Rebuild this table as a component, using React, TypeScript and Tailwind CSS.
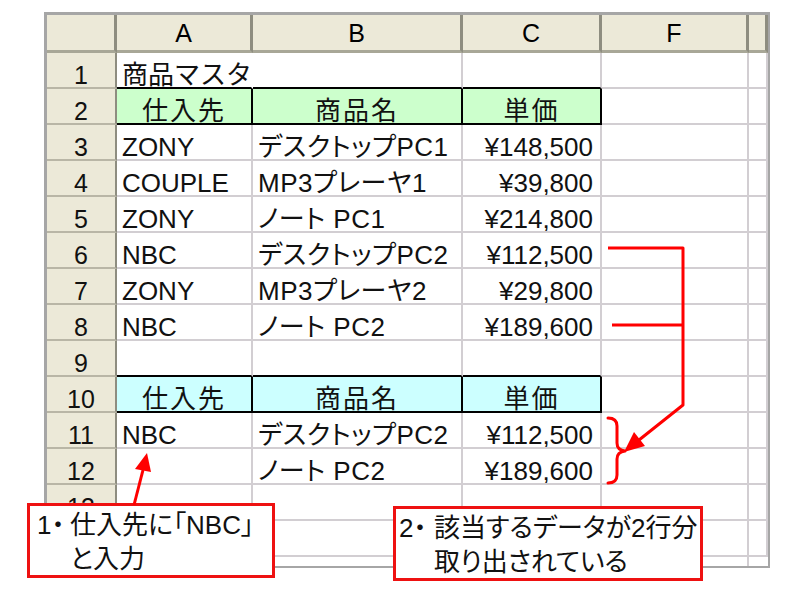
const font = "font-['Liberation_Sans','Noto_Sans_CJK_JP',sans-serif]";

type Row = {
  n: string;
  a?: string;
  b?: string;
  c?: string;
  kind?: "title" | "green" | "cyan" | "above";
};

const rows: Row[] = [
  { n: "1", a: "商品マスタ", kind: "title" },
  { n: "2", a: "仕入先", b: "商品名", c: "単価", kind: "green" },
  { n: "3", a: "ZONY", b: "デスクトップPC1", c: "¥148,500" },
  { n: "4", a: "COUPLE", b: "MP3プレーヤ1", c: "¥39,800" },
  { n: "5", a: "ZONY", b: "ノート PC1", c: "¥214,800" },
  { n: "6", a: "NBC", b: "デスクトップPC2", c: "¥112,500" },
  { n: "7", a: "ZONY", b: "MP3プレーヤ2", c: "¥29,800" },
  { n: "8", a: "NBC", b: "ノート PC2", c: "¥189,600" },
  { n: "9", kind: "above" },
  { n: "10", a: "仕入先", b: "商品名", c: "単価", kind: "cyan" },
  { n: "11", a: "NBC", b: "デスクトップPC2", c: "¥112,500" },
  { n: "12", b: "ノート PC2", c: "¥189,600" },
  { n: "13" },
  { n: "14" },
];

function HeaderRow() {
  const head = "h-full flex items-center justify-center pt-[2px] border-r-[3px] border-b-[3px] border-r-[#8e8d80] border-b-[#a8a797] bg-[#ece9d8] text-[25px]";
  return (
    <div className="flex h-[38px]">
      <div className={`${head} w-[70px] border-r-2`} />
      <div className={`${head} w-[136px]`}>A</div>
      <div className={`${head} w-[210px]`}>B</div>
      <div className={`${head} w-[139px]`}>C</div>
      <div className={`${head} w-[147px]`}>F</div>
      <div className={`${head} w-[19px] border-r-0`} />
    </div>
  );
}

function SheetRow({ row }: { row: Row }) {
  const cell = "h-full flex items-end leading-[24px] border-r-2 border-b-2 whitespace-nowrap";
  const grid = "border-[#d2ced2]";
  let a = grid;
  let b = grid;
  let c = grid;
  let fill = "";
  if (row.kind === "title") {
    a = "border-r-white border-b-black";
    b = "border-r-[#d2ced2] border-b-black";
    c = "border-r-[#d2ced2] border-b-black";
  }
  if (row.kind === "above") {
    a = "border-r-[#d2ced2] border-b-black";
    b = "border-r-[#d2ced2] border-b-black";
    c = "border-r-[#d2ced2] border-b-black";
  }
  if (row.kind === "green") {
    a = b = c = "border-black";
    fill = "bg-[#ccffcc] justify-center tracking-[2px]";
  }
  if (row.kind === "cyan") {
    a = b = c = "border-black";
    fill = "bg-[#ccffff] justify-center tracking-[2px]";
  }
  const head = !!fill;
  return (
    <div className="flex h-[36px] text-[26px] text-[#111]">
      <div className="h-full w-[70px] flex items-end justify-center leading-[24px] bg-[#ece9d8] border-r-2 border-b-2 border-r-[#8e8d80] border-b-[#b9b6a6] text-[25px]">
        {row.n}
      </div>
      <div className={`${cell} ${a} ${fill} w-[136px] ${head ? "" : "pl-[5px]"} ${row.kind === "title" ? "overflow-visible" : "overflow-hidden"}`}>
        {row.a}
      </div>
      <div className={`${cell} ${b} ${fill} w-[210px] ${head ? "" : "pl-[5px] [font-feature-settings:'palt'] tracking-[0.5px]"} overflow-hidden`}>
        {row.b}
      </div>
      <div className={`${cell} ${c} ${fill} w-[139px] ${head ? "" : "justify-end pr-[7px]"} overflow-hidden`}>
        {row.c}
      </div>
      <div className={`${cell} border-[#d2ced2] w-[147px]`} />
      <div className={`${cell} border-[#d2ced2] border-r-0 w-[19px]`} />
    </div>
  );
}

function Arrows() {
  return (
    <svg className="absolute left-0 top-0 pointer-events-none" width="800" height="590" viewBox="0 0 800 590">
      <g stroke="#ff0000" strokeWidth="3" fill="none" strokeLinejoin="round">
        <path d="M608 248 H683 V405 L639 440" />
        <path d="M612 325 H683" />
        <path d="M608 418 Q617 418 617 426 V443 Q617 450 625 451 Q617 452 617 459 V475 Q617 483 608 483" strokeLinecap="round" />
        <path d="M134 505 L143 470" />
      </g>
      <g fill="#ff0000">
        <polygon points="624,452 645,446 634,432" />
        <polygon points="147,453 151,472 135,469" />
      </g>
    </svg>
  );
}

function Callout({
  className,
  num,
  numWidth,
  lines,
}: {
  className: string;
  num: string;
  numWidth: string;
  lines: string[];
}) {
  return (
    <div className={`absolute bg-white border-[3px] border-[#ee1111] flex text-[26px] leading-[34px] text-[#111] [font-feature-settings:'palt'] ${className}`}>
      <span className={`shrink-0 ${numWidth}`}>{num}</span>
      <div className="flex flex-col">
        {lines.map((l) => (
          <span key={l} className="whitespace-nowrap">
            {l}
          </span>
        ))}
      </div>
    </div>
  );
}

export default function App() {
  return (
    <div className={`relative w-[800px] h-[590px] bg-white overflow-hidden ${font}`}>
      <div className="pt-[12px] pl-[44px]">
        <div className="w-[726px] border-t-[3px] border-l-[3px] border-r-2 border-b-2 border-[#a6a6a6]">
          <HeaderRow />
          {rows.map((r) => (
            <SheetRow key={r.n} row={r} />
          ))}
          <div className="flex h-[9px]">
            <div className="w-[70px] h-full bg-[#ece9d8] border-r-2 border-r-[#8e8d80]" />
            <div className="w-[136px] h-full border-r-2 border-[#d2ced2]" />
            <div className="w-[210px] h-full border-r-2 border-[#d2ced2]" />
            <div className="w-[139px] h-full border-r-2 border-[#d2ced2]" />
            <div className="w-[147px] h-full border-r-2 border-[#d2ced2]" />
            <div className="w-[19px] h-full" />
          </div>
        </div>
      </div>
      <Callout
        className="left-[27px] top-[503px] w-[248px] h-[75px] pl-[7px] pt-[2px]"
        num="1・"
        numWidth="w-[33px]"
        lines={["仕入先に「NBC」", "と入力"]}
      />
      <Callout
        className="left-[393px] top-[506px] w-[310px] h-[75px] pl-[3px] pt-[2px]"
        num="2・"
        numWidth="w-[35px]"
        lines={["該当するデータが2行分", "取り出されている"]}
      />
      <Arrows />
    </div>
  );
}
